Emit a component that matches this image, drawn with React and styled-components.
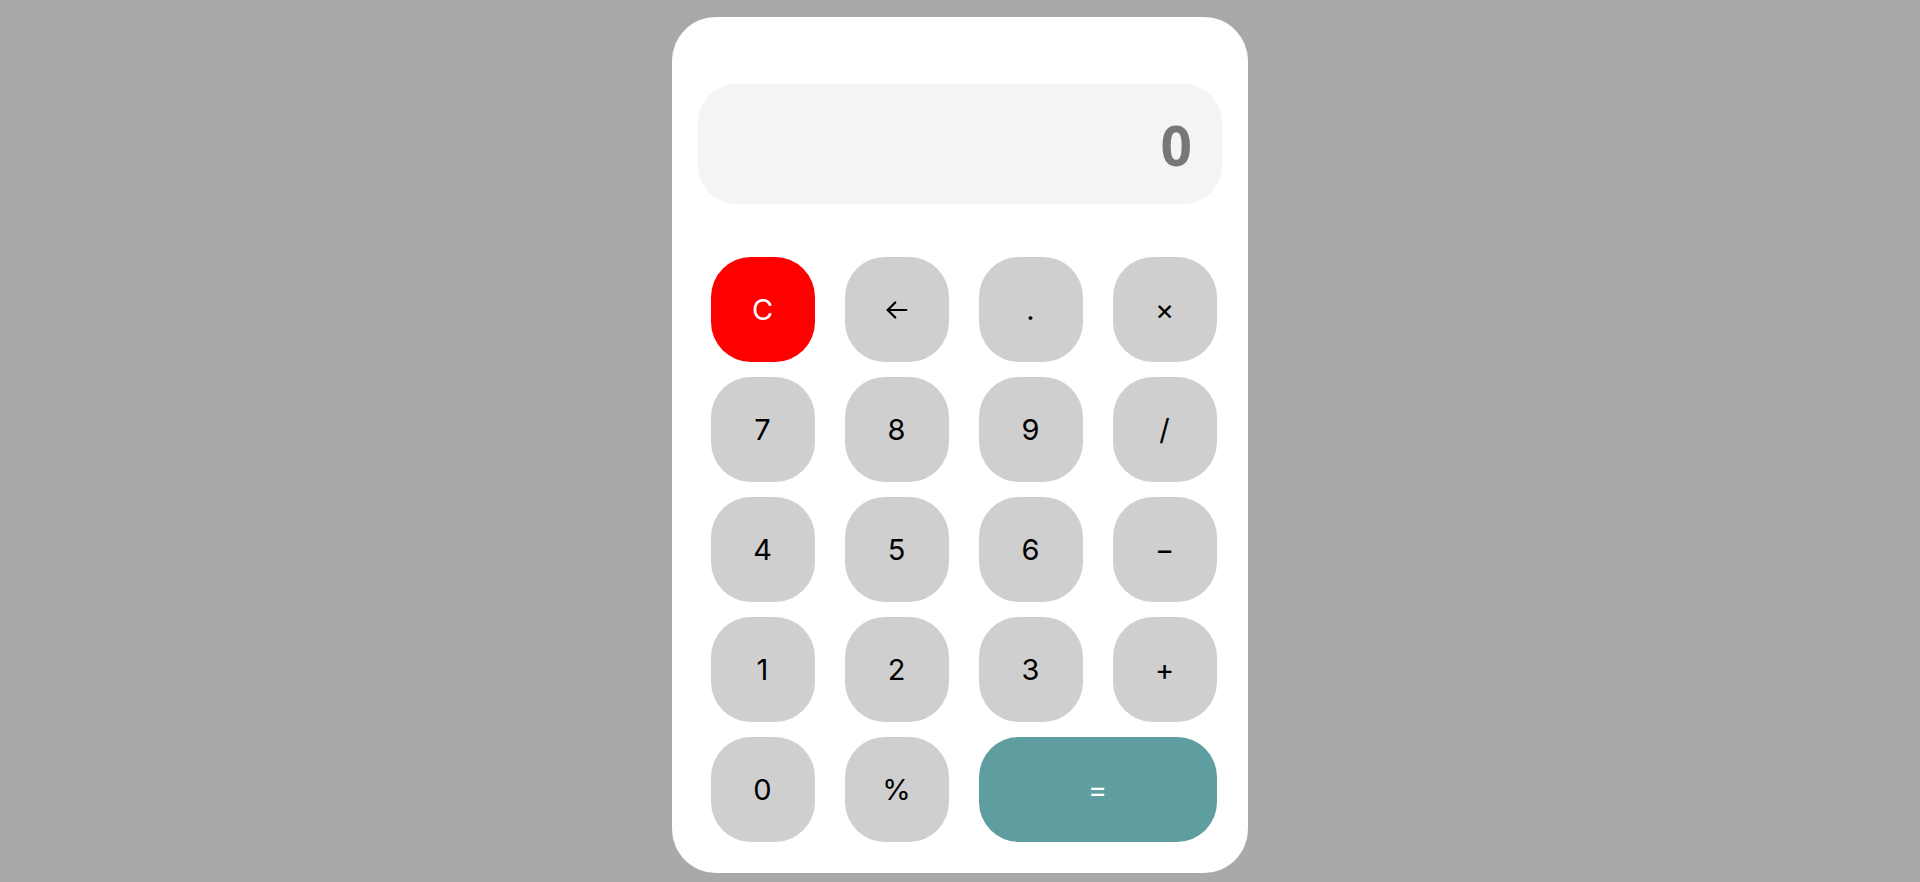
import React from 'react';
import styled, { createGlobalStyle } from 'styled-components';

const GlobalStyle = createGlobalStyle`
  body {
    margin: 0;
    background-color: #a9a9a9;
    font-family: Inter, "Noto Sans", sans-serif;
  }
`;

// Estilos para los componentes
const Page = styled.div`
  display: flex;
  justify-content: center;
  align-items: flex-start;
  padding-top: 17px;
  min-height: 865px;
`;

const Card = styled.div`
  width: 576px;
  box-sizing: border-box;
  padding: 67px 26px 31px;
  background-color: #fff;
  border-radius: 44px;
`;

const Display = styled.div`
  height: 120px;
  display: flex;
  align-items: center;
  justify-content: flex-end;
  padding: 0 30px;
  background-color: #f4f4f4;
  border-radius: 38px;
  font-family: "Open Sans", "Noto Sans", sans-serif;
  font-weight: 700;
  font-size: 55px;
  color: #777;
`;

const Keys = styled.div`
  display: grid;
  grid-template-columns: repeat(4, 104px);
  grid-auto-rows: 105px;
  column-gap: 30px;
  row-gap: 15px;
  justify-content: center;
  margin-top: 53px;
  padding-left: 7px;
`;

const Key = styled.button`
  grid-column: span ${(p) => p.$span || 1};
  border: none;
  border-radius: 40px;
  background-color: ${(p) => p.$bg || '#cfcfcf'};
  color: ${(p) => p.$color || '#000'};
  font-family: Inter, "Noto Sans", sans-serif;
  font-size: 29px;
  font-weight: 400;
  display: flex;
  align-items: center;
  justify-content: center;
  cursor: pointer;
  padding: 0;
`;

const BackIcon = () => (
  <svg width="28" height="28" viewBox="0 0 24 24" fill="none" stroke="#000" strokeWidth="1.9" strokeLinecap="round" strokeLinejoin="round">
    <path d="M20 12H4" />
    <path d="M10.5 5.5L4 12l6.5 6.5" />
  </svg>
);

const teclas = [
  { label: 'C', bg: '#ff0000', color: '#fff' },
  { label: <BackIcon />, key: 'back' },
  { label: '.' },
  { label: '×' },
  { label: '7' }, { label: '8' }, { label: '9' }, { label: '/' },
  { label: '4' }, { label: '5' }, { label: '6' }, { label: '−' },
  { label: '1' }, { label: '2' }, { label: '3' }, { label: '+' },
  { label: '0' }, { label: '%' },
  { label: '=', bg: '#5f9ea0', color: '#fff', span: 2 },
];

const App = () => {
  return (
    <Page>
      <GlobalStyle />
      <Card>
        <Display>0</Display>
        <Keys>
          {teclas.map((t, i) => (
            <Key key={t.key || i} $bg={t.bg} $color={t.color} $span={t.span}>
              {t.label}
            </Key>
          ))}
        </Keys>
      </Card>
    </Page>
  );
};

export default App;
